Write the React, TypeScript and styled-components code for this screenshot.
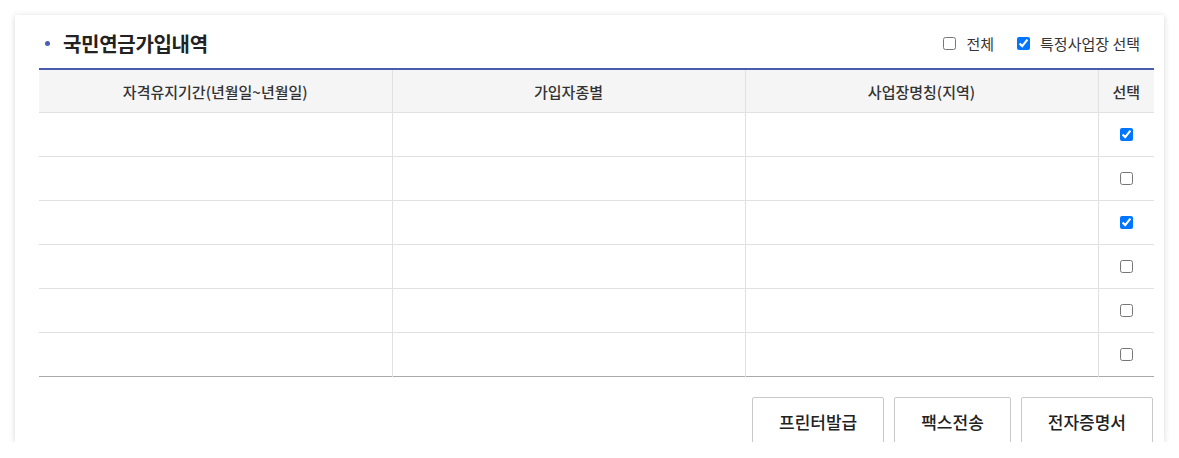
import styled, { createGlobalStyle } from "styled-components";

const GlobalStyle = createGlobalStyle`
  html, body {
    margin: 0;
    padding: 0;
    background: #fff;
  }
  body {
    font-family: "Noto Sans CJK KR", "Noto Sans", sans-serif;
    color: #222;
  }
`;

const rows = [true, false, true, false, false, false];

export default function App() {
  return (
    <>
      <GlobalStyle />
      <Page>
        <Card>
          <Header>
            <Title>국민연금가입내역</Title>
            <Options>
              <Option>
                <CheckBox type="checkbox" />
                <span>전체</span>
              </Option>
              <Option>
                <CheckBox type="checkbox" defaultChecked />
                <span>특정사업장 선택</span>
              </Option>
            </Options>
          </Header>

          <Table>
            <colgroup>
              <col style={{ width: 353 }} />
              <col style={{ width: 353 }} />
              <col style={{ width: 353 }} />
              <col style={{ width: 56 }} />
            </colgroup>
            <thead>
              <tr>
                <Th>자격유지기간(년월일~년월일)</Th>
                <Th>가입자종별</Th>
                <Th>사업장명칭(지역)</Th>
                <Th>선택</Th>
              </tr>
            </thead>
            <tbody>
              {rows.map((checked, i) => (
                <Tr key={i}>
                  <Td />
                  <Td />
                  <Td />
                  <Td>
                    <RowCheck type="checkbox" defaultChecked={checked} />
                  </Td>
                </Tr>
              ))}
            </tbody>
          </Table>

          <Actions>
            <Button>프린터발급</Button>
            <Button>팩스전송</Button>
            <Button>전자증명서</Button>
          </Actions>
        </Card>
      </Page>
    </>
  );
}

const Page = styled.div`
  padding: 15px 0 0 15px;
`;

const Card = styled.div`
  width: 1149px;
  height: 427px;
  box-sizing: border-box;
  padding: 0 10px 0 24px;
  background: #fff;
  box-shadow: 0 1px 6px rgba(0, 0, 0, 0.16);
  overflow: hidden;
`;

const Header = styled.div`
  height: 53px;
  box-sizing: border-box;
  padding: 4px 14px 0 0;
  display: flex;
  align-items: center;
  justify-content: space-between;
`;

const Title = styled.h2`
  position: relative;
  margin: 0;
  padding-left: 24px;
  font-size: 20px;
  font-weight: 700;
  color: #222;
  letter-spacing: -0.3px;

  &::before {
    content: "";
    position: absolute;
    left: 6px;
    top: 50%;
    width: 5px;
    height: 5px;
    margin-top: -3px;
    border-radius: 50%;
    background: #4a5db4;
  }
`;

const Options = styled.div`
  display: flex;
  align-items: center;
  gap: 23px;
`;

const Option = styled.label`
  display: flex;
  align-items: center;
  gap: 10px;
  font-size: 15px;
  color: #333;
`;

const CheckBox = styled.input`
  width: 13px;
  height: 13px;
  margin: 0;
`;

const Table = styled.table`
  width: 1115px;
  table-layout: fixed;
  border-collapse: collapse;
  border-top: 2px solid #4a5cb0;
  border-bottom: 1px solid #aaa;
`;

const Th = styled.th`
  height: 42px;
  padding: 0;
  background: #f5f5f5;
  border-bottom: 1px solid #e1e1e1;
  font-size: 15px;
  font-weight: 500;
  color: #333;
  text-align: center;

  & + & {
    border-left: 1px solid #e1e1e1;
  }
`;

const Tr = styled.tr`
  & + & td {
    border-top: 1px solid #e1e1e1;
  }
`;

const Td = styled.td`
  height: 43px;
  padding: 0;
  text-align: center;
  vertical-align: middle;

  & + & {
    border-left: 1px solid #e1e1e1;
  }
`;

const RowCheck = styled.input`
  display: block;
  width: 13px;
  height: 13px;
  margin: 0 auto;
`;

const Actions = styled.div`
  display: flex;
  justify-content: flex-end;
  gap: 10px;
  padding: 20px 1px 0 0;
`;

const Button = styled.button`
  height: 48px;
  padding: 0 26px;
  border: 1px solid #c8c8c8;
  border-radius: 2px;
  background: #fff;
  font-family: "Noto Sans CJK KR", "Noto Sans", sans-serif;
  font-size: 17px;
  font-weight: 500;
  color: #222;
  cursor: pointer;
`;
